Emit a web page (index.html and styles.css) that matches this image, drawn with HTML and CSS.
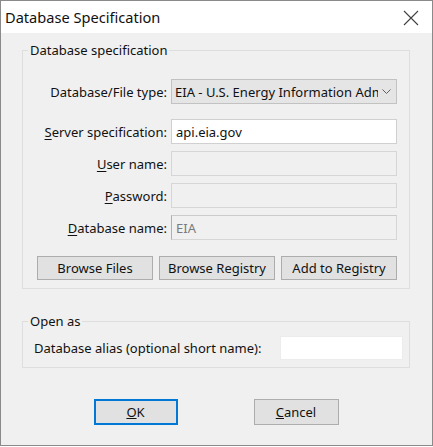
FILE: index.html
```html
<!DOCTYPE html>
<html>
<head>
<meta charset="utf-8">
<link rel="stylesheet" href="styles.css">
</head>
<body>
<div class="window">
  <div class="titlebar">
    <span class="title">Database Specification</span>
    <svg class="close" width="16" height="16" viewBox="0 0 16 16"><path d="M1 1 L15 15 M15 1 L1 15" stroke="#404040" stroke-width="1.1" fill="none"/></svg>
  </div>
  <div class="content">
    <fieldset class="group group-spec">
      <legend>Database specification</legend>
      <div class="rows">
        <div class="row row-first">
          <label class="label">Database/File type:</label>
          <div class="combo"><span class="combo-text">EIA - U.S. Energy Information Administration</span><svg class="chev" width="9" height="5" viewBox="0 0 9 5"><path d="M0.5 0.5 L4.5 4.5 L8.5 0.5" stroke="#606060" fill="none"/></svg></div>
        </div>
        <div class="row">
          <label class="label"><u>S</u>erver specification:</label>
          <div class="input">api.eia.gov</div>
        </div>
        <div class="row">
          <label class="label"><u>U</u>ser name:</label>
          <div class="input disabled"></div>
        </div>
        <div class="row">
          <label class="label"><u>P</u>assword:</label>
          <div class="input disabled"></div>
        </div>
        <div class="row">
          <label class="label"><u>D</u>atabase name:</label>
          <div class="input disabled dbname">EIA</div>
        </div>
      </div>
      <div class="btnrow">
        <div class="btn">Browse Files</div>
        <div class="btn">Browse Registry</div>
        <div class="btn">Add to Registry</div>
      </div>
    </fieldset>
    <fieldset class="group group-open">
      <legend>Open as</legend>
      <div class="alias-row">
        <span>Database alias (optional short name):</span>
        <div class="alias-input"></div>
      </div>
    </fieldset>
    <div class="footer">
      <div class="btn dlg default"><u>O</u>K</div>
      <div class="btn dlg"><u>C</u>ancel</div>
    </div>
  </div>
</div>
</body>
</html>
```

FILE: styles.css
```css
html, body {
  margin: 0;
  padding: 0;
  background: #ffffff;
}
body {
  font-family: "Noto Sans", "Open Sans", sans-serif;
  font-size: 13px;
  color: #111111;
}
.window {
  width: 433px;
  height: 446px;
  box-sizing: border-box;
  border: 1px solid #8a8a8a;
  background: #f0f0f0;
  display: flex;
  flex-direction: column;
}
.titlebar {
  height: 32px;
  background: #ffffff;
  display: flex;
  align-items: center;
  justify-content: space-between;
  padding-left: 4px;
  padding-right: 13px;
}
.title {
  font-size: 14.6px;
  color: #111;
}
.close {
  display: block;
  margin-top: 1px;
}
.content {
  padding: 9px 22px 0 21px;
  display: flex;
  flex-direction: column;
}
.group {
  margin: 0;
  padding: 0;
  border: 1px solid #dedede;
  min-width: 0;
}
.group legend {
  margin-left: 5px;
  padding: 0 2px;
  line-height: 16px;
}
.group-spec {
  padding: 0 12px 8px 0;
}
.rows {
  display: flex;
  flex-direction: column;
  margin-top: 21px;
}
.row {
  display: flex;
  align-items: center;
  gap: 4px;
  height: 25px;
}
.row + .row {
  margin-top: 7px;
}
.row-first {
  margin-bottom: 8px;
}
.label {
  width: 144px;
  text-align: right;
  white-space: nowrap;
}
.label u {
  text-underline-offset: 2px;
}
.combo {
  width: 226px;
  height: 25px;
  box-sizing: border-box;
  border: 1px solid #c2c2c2;
  background: #e5e5e5;
  display: flex;
  align-items: center;
  padding-left: 3px;
  padding-right: 5px;
  gap: 4px;
}
.combo-text {
  flex: 1;
  overflow: hidden;
  white-space: nowrap;
}
.chev {
  flex: none;
}
.input {
  width: 226px;
  height: 25px;
  box-sizing: border-box;
  border: 1px solid #d0d0d0;
  background: #ffffff;
  padding-left: 4px;
  display: flex;
  align-items: center;
}
.input.disabled {
  background: #f0f0f0;
  border-color: #d6d6d6;
}
.input.dbname {
  color: #7a7a7a;
  border-left-color: #b0b0b0;
  border-top-color: #cbcbcb;
}
.btnrow {
  display: grid;
  grid-template-columns: 1fr 1fr 1fr;
  column-gap: 6px;
  margin: 16px 0 0 14px;
  height: 24px;
}
.btn {
  box-sizing: border-box;
  border: 1px solid #adadad;
  background: #e1e1e1;
  display: flex;
  align-items: center;
  justify-content: center;
  white-space: nowrap;
}
.group-open {
  margin-top: 24px;
  padding: 0 6px 7px 0;
}
.alias-row {
  margin-top: 7px;
  padding-left: 11px;
  height: 24px;
  display: flex;
  align-items: center;
  justify-content: space-between;
}
.alias-input {
  width: 123px;
  height: 24px;
  box-sizing: border-box;
  background: #ffffff;
  border: 1px solid #ececec;
}
.footer {
  margin-top: 31px;
  display: flex;
  justify-content: center;
  gap: 76px;
}
.btn.dlg {
  width: 85px;
  height: 26px;
}
.btn.default {
  width: 84px;
  border: 2px solid #0078d7;
}
```
